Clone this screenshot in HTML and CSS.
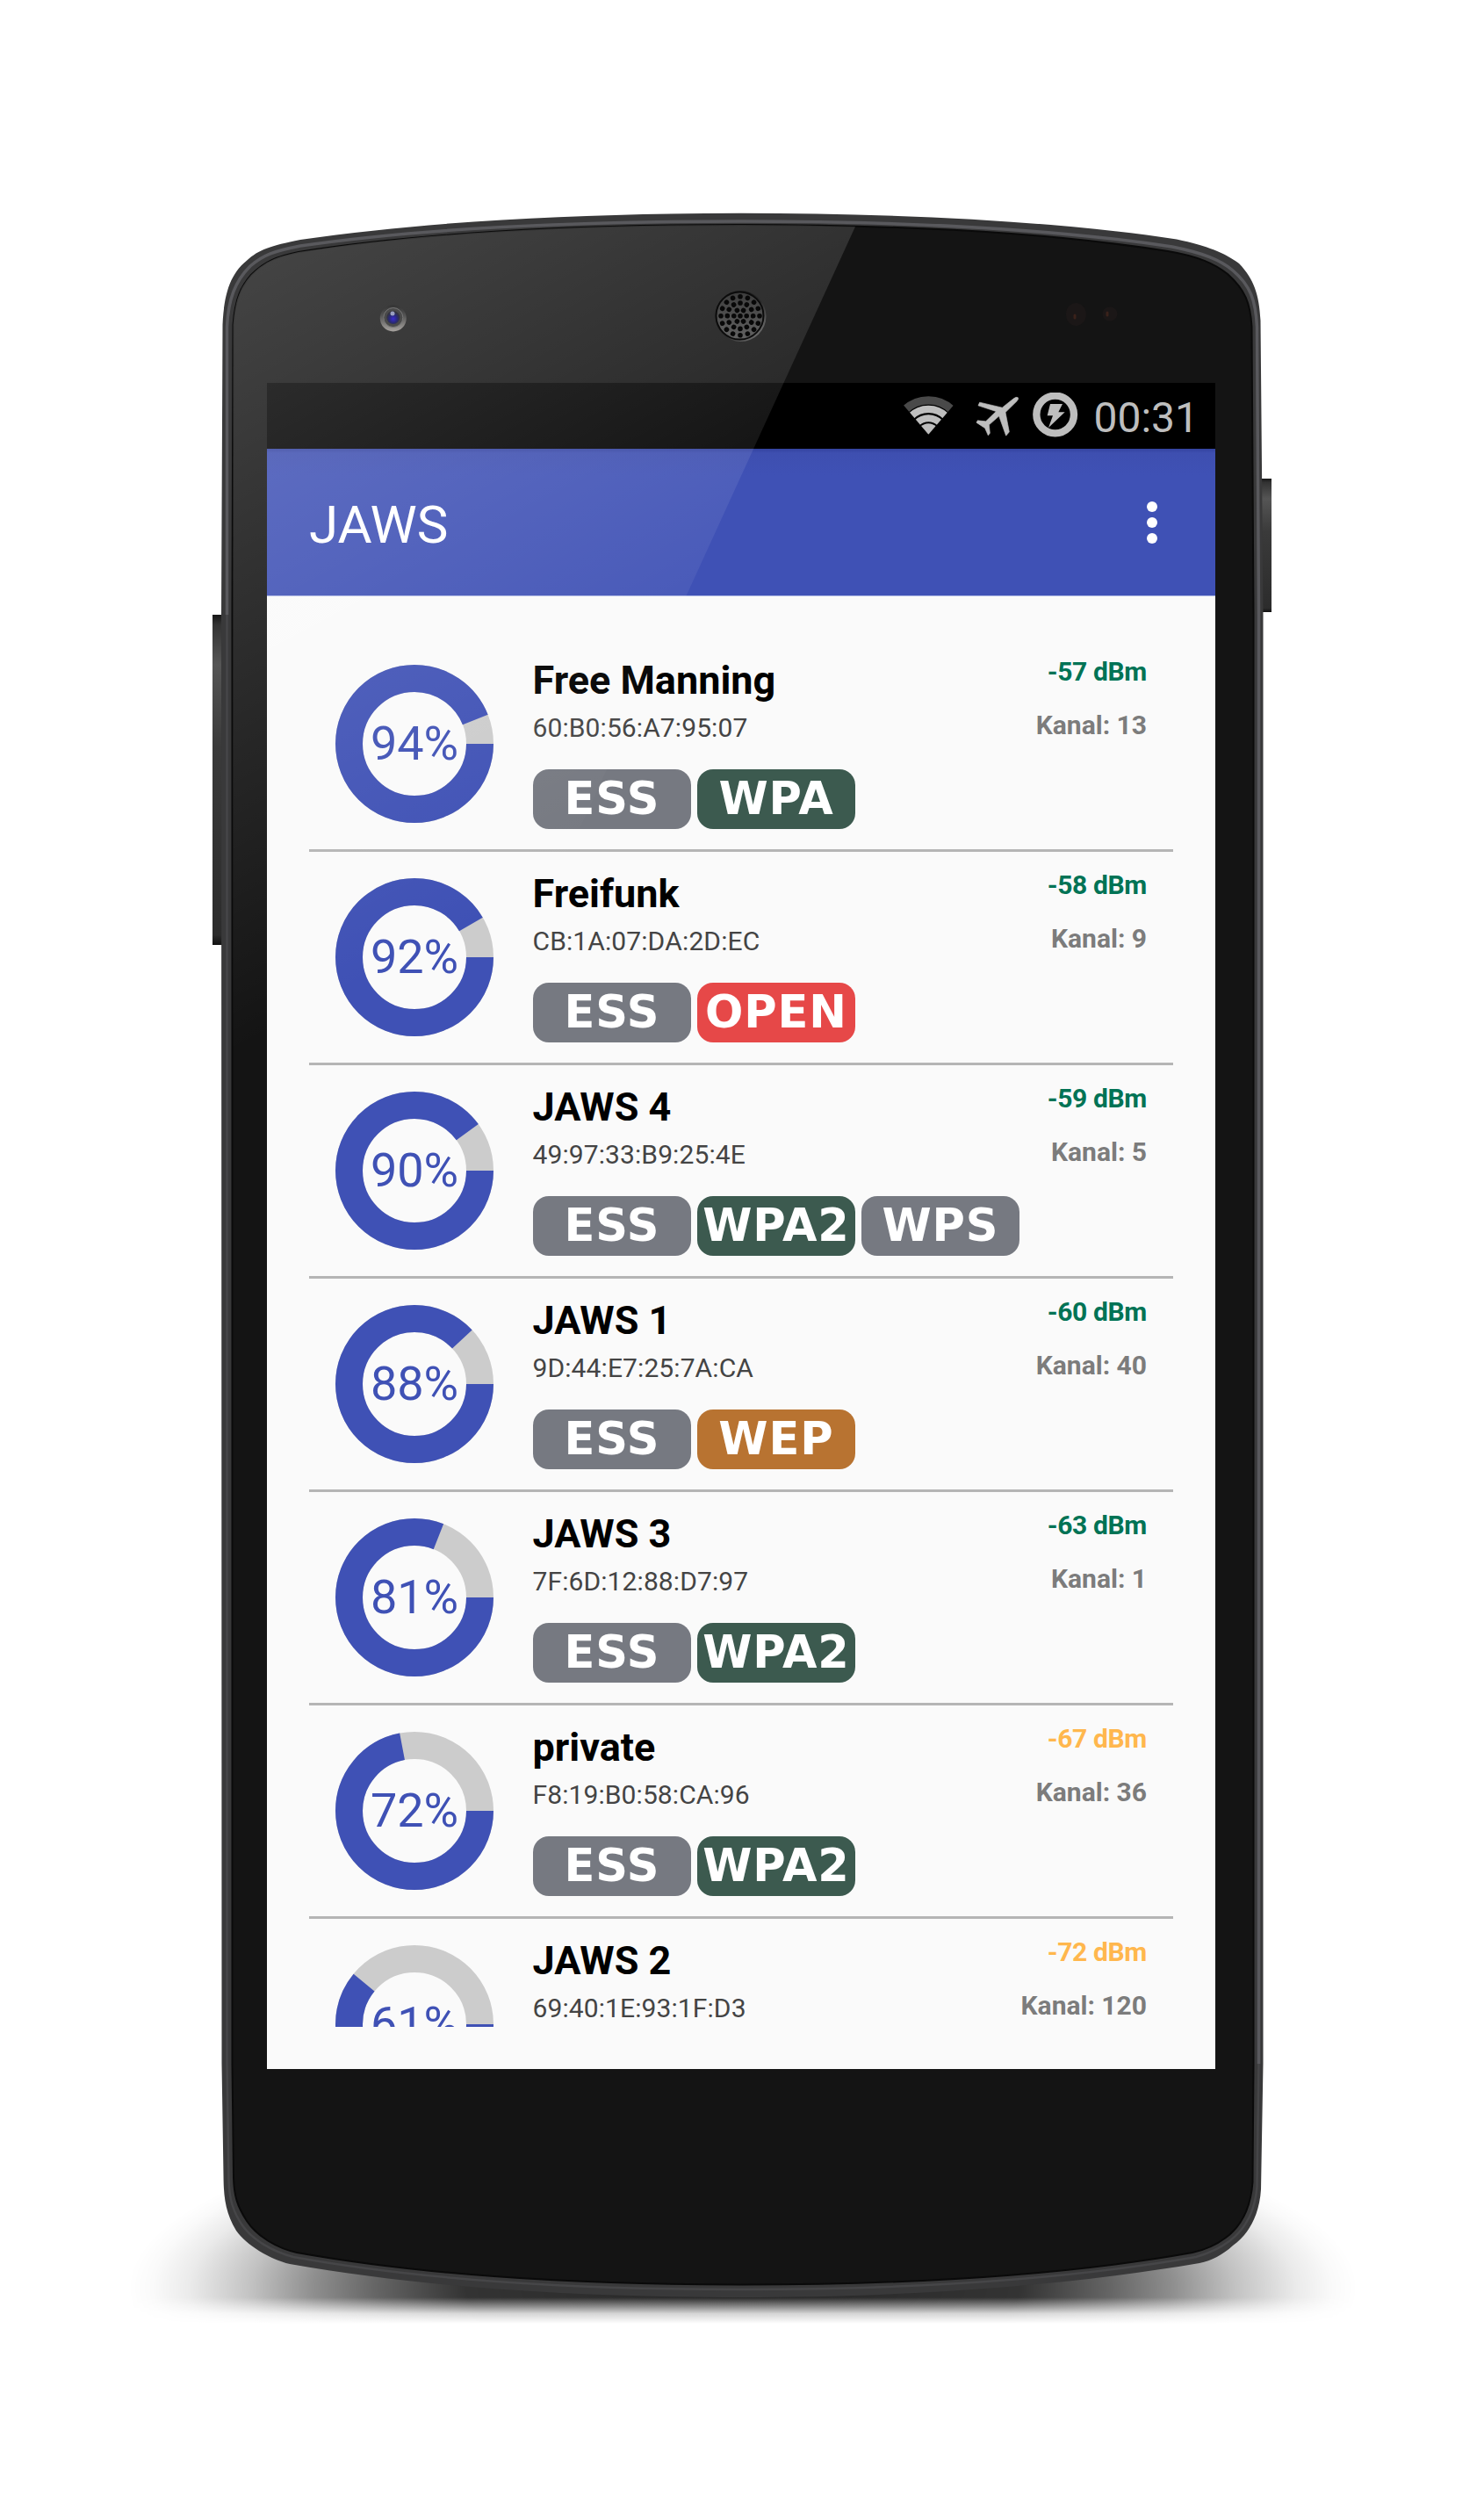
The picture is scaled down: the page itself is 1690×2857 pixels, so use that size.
FILE: index.html
```html
<!DOCTYPE html>
<html lang="de">
<head>
<meta charset="utf-8">
<title>JAWS</title>
<link rel="stylesheet" href="styles.css">
</head>
<body>
<div class="stage">
  <svg class="device" viewBox="0 0 1690 2857" aria-hidden="true">
    <defs>
      <radialGradient id="floor" gradientUnits="userSpaceOnUse" cx="0" cy="0" r="1" gradientTransform="translate(846 2605) scale(700 205)">
        <stop offset="0" stop-opacity=".85"/><stop offset=".45" stop-opacity=".8"/><stop offset=".6" stop-opacity=".6"/><stop offset=".7" stop-opacity=".44"/>
        <stop offset=".8" stop-opacity=".24"/><stop offset=".9" stop-opacity=".08"/><stop offset=".96" stop-opacity=".02"/><stop offset="1" stop-opacity="0"/>
      </radialGradient>
      <linearGradient id="fade" gradientUnits="userSpaceOnUse" x1="0" y1="2600" x2="0" y2="2646">
        <stop offset="0" stop-color="#fff"/><stop offset=".35" stop-color="#fff"/><stop offset=".6" stop-color="#808080"/><stop offset=".75" stop-color="#333"/><stop offset="1" stop-color="#000"/>
      </linearGradient>
      <mask id="floorMask" maskUnits="userSpaceOnUse" x="100" y="2380" width="1490" height="300"><rect x="100" y="2380" width="1490" height="300" fill="url(#fade)"/></mask>
      <linearGradient id="key" x1="0" y1="0" x2="0" y2="1">
        <stop offset="0" stop-color="#161616"/><stop offset=".03" stop-color="#333"/><stop offset=".15" stop-color="#555"/><stop offset=".4" stop-color="#3a3a3a"/><stop offset=".97" stop-color="#2c2c2c"/><stop offset="1" stop-color="#111"/>
      </linearGradient>
      <radialGradient id="lens" cx=".5" cy=".6" r=".5"><stop offset="0" stop-color="#3a2ad0"/><stop offset=".6" stop-color="#2a2a78"/><stop offset="1" stop-color="#333340"/></radialGradient>
      <linearGradient id="lensRim" x1="0" y1="0" x2="0" y2="1"><stop offset="0" stop-color="#333"/><stop offset=".4" stop-color="#555"/><stop offset="1" stop-color="#a8a4a0"/></linearGradient>
      <linearGradient id="spkRim" x1="0" y1="0" x2="1" y2="1"><stop offset="0" stop-color="#111"/><stop offset=".55" stop-color="#2a2a2a"/><stop offset="1" stop-color="#888"/></linearGradient>
      <linearGradient id="mesh" x1="0" y1="0" x2="0" y2="1"><stop offset="0" stop-color="#3c3c3c"/><stop offset="1" stop-color="#626262"/></linearGradient>
    </defs>
    <rect x="100" y="2380" width="1490" height="300" fill="url(#floor)" mask="url(#floorMask)"/>
    <rect x="242" y="700" width="14" height="376" fill="url(#key)"/>
    <rect x="1434" y="545" width="14" height="152" fill="url(#key)"/>
    <path fill="#39393a" d="M252 700 L253.500 370 C255 335 262 312 281 296.700 C295 284 308 280 342 273 C500 250 680 243 844 242.700 C1010 243 1190 250 1340 272.500 C1375 280 1395 288 1411 300 C1428 318 1434 335 1435.500 365 L1438.500 700 V2350 L1436 2493 C1434 2525 1420 2546 1404 2557 C1392 2568 1380 2574 1366 2577 C1190 2607 1000 2616 844 2616 C690 2616 500 2608 330 2578 C308 2573 280 2556 269 2540 C258 2522 255 2505 254.600 2483 L252.500 2350 Z"/>
    <path fill="none" stroke="#59595d" stroke-width="3.500" d="M258.500 700 V372 C260 340 268 320 285 303 C300 290 312 286 342 280 C500 257 680 252 844 252 C1010 252 1190 259 1335 281 C1370 288 1390 296 1404 308 C1424 325 1430 342 1431.500 372 L1433.500 700 V2350"/>
    <path fill="none" stroke="#464648" stroke-width="2.500" d="M1433.500 2350 L1431.500 2490 C1429 2522 1416 2540 1400 2552 C1388 2561 1376 2566 1362 2570 C1190 2600 1000 2607 844 2607 C690 2607 500 2600 334 2570 C311 2564 288 2551 276 2534 C265 2518 261 2503 260.500 2483 L258.500 2350 V700"/>
    <path fill="#141414" stroke="#0a0a0a" stroke-width="2" d="M264.500 700 L265.500 370 C268 338 275 326 286 313 C302 297 316 292 340 287 C500 262 680 256 844 256 C1010 256 1190 264 1330 286 C1366 292 1384 301 1398 312 C1418 330 1424 345 1425.500 372 L1427.500 700 V2350 L1426.500 2485 C1424 2518 1411 2537 1396 2548 C1384 2557 1372 2562 1358 2565 C1190 2595 1000 2601.500 844 2601.500 C690 2601.500 500 2594 338 2565 C315 2560 292 2546 281 2529 C270 2512 266.500 2500 266 2480 L264.500 2350 Z"/>
    <path fill="#1b1717" d="M1221 346a11.500 13 0 1 1 0 24 11.500 13 0 0 1 0-24zM1261 350a8.500 8 0 1 1 0 15 8.500 8 0 0 1 0-15z"/>
    <path stroke="#3a221b" stroke-width="3" stroke-linecap="round" d="M1224 359v3M1261 356v3"/>
  </svg>

  <main class="screen">
    <header class="status">
      <svg width="59" height="46" viewBox="57 43.500 177 138">
        <clipPath id="fan"><path d="M145 175L56 70V40H235V70Z"/></clipPath>
        <g clip-path="url(#fan)" fill="none" stroke="#bebebe">
          <circle cx="145" cy="174" r="116" stroke-width="28" stroke="#494949"/>
          <circle cx="145" cy="174" r="86" stroke-width="25"/>
          <circle cx="145" cy="174" r="55" stroke-width="24"/>
          <circle cx="145" cy="174" r="37" fill="#bebebe" stroke="none"/>
        </g>
      </svg>
      <svg class="plane" width="50" height="46" viewBox="306 43.500 150 138"><path fill="#bebebe" stroke="#bebebe" stroke-width="2" stroke-linejoin="round" d="M436 52Q446 45 451 49Q454 54 447 61L408 99L421 166L410 179L386 112L352 142L355 170L349 178L338 153L309 134L313 127L341 130L376 96L315 76L320 65L397 83Z"/></svg>
      <svg class="charge" width="53" height="53" viewBox="498 33 159 159"><circle cx="578" cy="108" r="64" fill="none" stroke="#bebebe" stroke-width="25"/><path fill="#bebebe" d="M561 72H603L589 100H611L555 153L570 112H551Z"/></svg>
      <span class="clock">00:31</span>
    </header>
    <div class="appbar">
      <h1>JAWS</h1>
      <svg width="12" height="48" viewBox="0 0 12 48" fill="#fff"><circle cx="6" cy="6" r="6"/><circle cx="6" cy="24" r="6"/><circle cx="6" cy="42" r="6"/></svg>
    </div>
    <div class="list">
      <article class="net">
        <svg class="dial" viewBox="0 0 180 180"><circle class="track" cx="90" cy="90" r="74.500"/><circle class="level" cx="90" cy="90" r="74.500" pathLength="100" stroke-dasharray="94 100"/><text x="90" y="108">94%</text></svg>
        <div class="info"><h2>Free Manning</h2><p>60:B0:56:A7:95:07</p><div class="tags"><span class="tag">ESS</span><span class="tag wpa">WPA</span></div></div>
        <div class="meta"><span class="good">-57 dBm</span><span>Kanal: 13</span></div>
      </article>
      <article class="net">
        <svg class="dial" viewBox="0 0 180 180"><circle class="track" cx="90" cy="90" r="74.500"/><circle class="level" cx="90" cy="90" r="74.500" pathLength="100" stroke-dasharray="91.600 100"/><text x="90" y="108">92%</text></svg>
        <div class="info"><h2>Freifunk</h2><p>CB:1A:07:DA:2D:EC</p><div class="tags"><span class="tag">ESS</span><span class="tag open">OPEN</span></div></div>
        <div class="meta"><span class="good">-58 dBm</span><span>Kanal: 9</span></div>
      </article>
      <article class="net">
        <svg class="dial" viewBox="0 0 180 180"><circle class="track" cx="90" cy="90" r="74.500"/><circle class="level" cx="90" cy="90" r="74.500" pathLength="100" stroke-dasharray="90 100"/><text x="90" y="108">90%</text></svg>
        <div class="info"><h2>JAWS 4</h2><p>49:97:33:B9:25:4E</p><div class="tags"><span class="tag">ESS</span><span class="tag wpa">WPA2</span><span class="tag">WPS</span></div></div>
        <div class="meta"><span class="good">-59 dBm</span><span>Kanal: 5</span></div>
      </article>
      <article class="net">
        <svg class="dial" viewBox="0 0 180 180"><circle class="track" cx="90" cy="90" r="74.500"/><circle class="level" cx="90" cy="90" r="74.500" pathLength="100" stroke-dasharray="88 100"/><text x="90" y="108">88%</text></svg>
        <div class="info"><h2>JAWS 1</h2><p>9D:44:E7:25:7A:CA</p><div class="tags"><span class="tag">ESS</span><span class="tag wep">WEP</span></div></div>
        <div class="meta"><span class="good">-60 dBm</span><span>Kanal: 40</span></div>
      </article>
      <article class="net">
        <svg class="dial" viewBox="0 0 180 180"><circle class="track" cx="90" cy="90" r="74.500"/><circle class="level" cx="90" cy="90" r="74.500" pathLength="100" stroke-dasharray="81 100"/><text x="90" y="108">81%</text></svg>
        <div class="info"><h2>JAWS 3</h2><p>7F:6D:12:88:D7:97</p><div class="tags"><span class="tag">ESS</span><span class="tag wpa">WPA2</span></div></div>
        <div class="meta"><span class="good">-63 dBm</span><span>Kanal: 1</span></div>
      </article>
      <article class="net">
        <svg class="dial" viewBox="0 0 180 180"><circle class="track" cx="90" cy="90" r="74.500"/><circle class="level" cx="90" cy="90" r="74.500" pathLength="100" stroke-dasharray="72 100"/><text x="90" y="108">72%</text></svg>
        <div class="info"><h2>private</h2><p>F8:19:B0:58:CA:96</p><div class="tags"><span class="tag">ESS</span><span class="tag wpa">WPA2</span></div></div>
        <div class="meta"><span class="fair">-67 dBm</span><span>Kanal: 36</span></div>
      </article>
      <article class="net">
        <svg class="dial" viewBox="0 0 180 180"><circle class="track" cx="90" cy="90" r="74.500"/><circle class="level" cx="90" cy="90" r="74.500" pathLength="100" stroke-dasharray="61 100"/><text x="90" y="108">61%</text></svg>
        <div class="info"><h2>JAWS 2</h2><p>69:40:1E:93:1F:D3</p></div>
        <div class="meta"><span class="fair">-72 dBm</span><span>Kanal: 120</span></div>
      </article>
    </div>
  </main>

  <svg class="device gloss" viewBox="0 0 1690 2857" aria-hidden="true">
    <defs>
      <linearGradient id="sheen" gradientUnits="userSpaceOnUse" x1="304" y1="300" x2="670" y2="985">
        <stop offset="0" stop-color="#fff" stop-opacity=".2"/><stop offset="1" stop-color="#fff" stop-opacity="0"/>
      </linearGradient>
    </defs>
    <path fill="url(#sheen)" d="M265 1210 L265.500 370 C268 338 275 326 286 313 C302 297 316 292 340 287 C500 262 680 256 844 256 Q910 256 974 258 L538 1210 Z"/>
    <circle cx="843.500" cy="360" r="29" fill="url(#spkRim)"/>
    <circle cx="842.500" cy="359.500" r="27" fill="url(#mesh)" stroke="#0c0c0c" stroke-width="2"/>
    <g fill="none" stroke="#080808" stroke-width="5.600" stroke-linecap="round">
      <path d="M843 359.700h.01"/>
      <circle cx="843" cy="359.700" r="7.200" pathLength="60" stroke-dasharray="0.010 9.990"/>
      <circle cx="843" cy="359.700" r="14.700" pathLength="120" stroke-dasharray="0.010 9.990" transform="rotate(30 843 359.700)"/>
      <circle cx="843" cy="359.700" r="22" pathLength="160" stroke-dasharray="0.010 9.990"/>
    </g>
    <circle cx="447.800" cy="362.500" r="15" fill="url(#lensRim)"/>
    <circle cx="447.800" cy="361.500" r="11" fill="#4a4a4a" stroke="#777" stroke-width="1"/>
    <circle cx="447.800" cy="361.500" r="7.500" fill="url(#lens)"/>
    <circle cx="447" cy="357" r="2.500" fill="#9aa0c0"/>
  </svg>
</div>
</body>
</html>
```
FILE: styles.css
```css
* { box-sizing: border-box; }
body {
  margin: 0;
  background: #fff;
  font-family: Roboto, "Liberation Sans", sans-serif;
}
h1, h2, p { margin: 0; }

.stage {
  display: grid;
  width: 1690px;
  height: 2857px;
  overflow: hidden;
}
.device, .screen { grid-area: 1 / 1; }
.device { width: 1690px; height: 2857px; }
.gloss { pointer-events: none; z-index: 1; }

.screen {
  display: flex;
  flex-direction: column;
  width: 1080px;
  height: 1920px;
  margin: 436px 0 0 304px;
  background: #fafafa;
  z-index: 0;
}

.status {
  display: flex;
  align-items: center;
  justify-content: flex-end;
  height: 75px;
  padding-right: 19px;
  background: #000;
}
.plane { margin-left: 24px; }
.charge { margin-left: 14px; }
.clock {
  margin-left: 17px;
  padding-top: 4px;
  font-size: 48px;
  line-height: 56px;
  color: #bebebe;
}

.appbar {
  display: flex;
  align-items: center;
  justify-content: space-between;
  height: 168px;
  padding: 0 66px 0 48px;
  background: linear-gradient(#3443a0, #3e4fb0 5px, #3f51b5 30px);
  border-bottom: 1px solid #aab4e2;
  color: #fff;
}
.appbar h1 {
  padding-top: 7px;
  font-size: 60px;
  font-weight: 400;
  line-height: 70px;
}

.list {
  flex: 1;
  margin: 48px;
  overflow: hidden;
}
.net {
  display: flex;
  height: 243px;
  padding: 0 30px;
  border-bottom: 3px solid #b5b5b5;
}
.dial {
  flex: none;
  width: 180px;
  height: 180px;
  margin-top: 30px;
}
.dial circle { fill: none; stroke-width: 31; }
.dial .track { stroke: #ccc; }
.dial .level { stroke: #3f51b5; }
.dial text {
  fill: #3f51b5;
  font-size: 54px;
  text-anchor: middle;
}

.info {
  flex: 1;
  margin-left: 44.5px;
  padding-top: 22px;
}
.info h2 {
  font-size: 45px;
  font-weight: 700;
  line-height: 52px;
  color: #000;
}
.info p {
  margin-top: 10px;
  font-size: 30px;
  font-kerning: none;
  letter-spacing: .1px;
  line-height: 36px;
  color: #444;
}
.tags {
  display: flex;
  gap: 7px;
  margin-top: 29px;
}
.tag {
  width: 180px;
  height: 68px;
  border-radius: 18px;
  background: #767981;
  color: #fff;
  font: 700 51px/68px "DejaVu Sans", sans-serif;
  letter-spacing: .9px;
  text-indent: .9px;
  text-align: center;
  white-space: nowrap;
}
.wpa { background: #3c5a4f; }
.open { background: #e64848; }
.wep { background: #b87331; }

.meta {
  display: flex;
  flex-direction: column;
  align-items: flex-end;
  gap: 25px;
  padding-top: 20px;
  font-size: 30px;
  font-weight: 700;
  line-height: 36px;
  color: #7c7c7c;
}
.good, .fair { letter-spacing: -.35px; }
.good { color: #007355; }
.fair { color: #ffb74d; }
```
